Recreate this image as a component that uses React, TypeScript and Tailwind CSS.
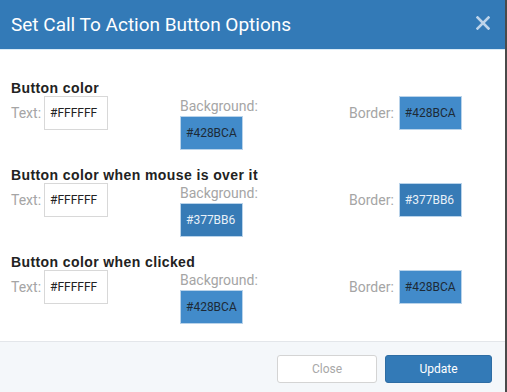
import React from 'react';

type Swatch = { value: string; bg: string; fg: string };

const sections: { title: string; text: string; background: Swatch; border: Swatch }[] = [
  {
    title: 'Button color',
    text: '#FFFFFF',
    background: { value: '#428BCA', bg: 'bg-[#428bca]', fg: 'text-[#1d2a36]' },
    border: { value: '#428BCA', bg: 'bg-[#428bca]', fg: 'text-[#1d2a36]' },
  },
  {
    title: 'Button color when mouse is over it',
    text: '#FFFFFF',
    background: { value: '#377BB6', bg: 'bg-[#377bb6]', fg: 'text-[#e8f0f8]' },
    border: { value: '#377BB6', bg: 'bg-[#377bb6]', fg: 'text-[#e8f0f8]' },
  },
  {
    title: 'Button color when clicked',
    text: '#FFFFFF',
    background: { value: '#428BCA', bg: 'bg-[#428bca]', fg: 'text-[#1d2a36]' },
    border: { value: '#428BCA', bg: 'bg-[#428bca]', fg: 'text-[#1d2a36]' },
  },
];

function ColorBox({ swatch }: { swatch: Swatch }) {
  return (
    <div
      className={`w-[63px] h-[34px] flex items-center pl-[5px] border border-[#b9d3ea] text-[12px] ${swatch.bg} ${swatch.fg}`}
    >
      {swatch.value}
    </div>
  );
}

export default function App() {
  return (
    <div className="w-[507px] h-[392px] flex bg-white font-['Roboto',sans-serif]">
      <div className="w-[505px] h-full flex flex-col">
        {/* Header */}
        <div className="h-[50px] shrink-0 bg-[#337ab7] flex items-center justify-between pl-[11px] pr-[15px] border-b border-[#d9ebf7]">
          <h1 className="text-white text-[19px] leading-none">Set Call To Action Button Options</h1>
          <svg width="14" height="14" viewBox="0 0 14 14" className="mb-[3px]">
            <path d="M1.5 1.5 L12.5 12.5 M12.5 1.5 L1.5 12.5" stroke="#bdd4ea" strokeWidth="2.6" strokeLinecap="square" />
          </svg>
        </div>

        {/* Body */}
        <div className="flex-1 pt-[30px] px-[11px]">
          {sections.map((s, i) => (
            <div key={i} className="h-[87px]">
              <div className="font-['Liberation_Sans',sans-serif] font-bold text-[14px] tracking-[0.4px] leading-[17px] text-[#222] h-[18px]">
                {s.title}
              </div>
              <div className="flex mt-[-2px]">
                <div className="w-[169px] flex items-center h-[34px]">
                  <span className="text-[14px] text-[#a5a5a5] mr-[3px]">Text:</span>
                  <div className="w-[64px] h-[34px] border border-[#d8d8d8] flex items-center pl-[5px] text-[12px] text-[#222]">
                    {s.text}
                  </div>
                </div>
                <div className="w-[169px] flex flex-col">
                  <span className="text-[14px] leading-[16px] mt-[2px] text-[#a5a5a5]">Background:</span>
                  <div className="mt-[2px]">
                    <ColorBox swatch={s.background} />
                  </div>
                </div>
                <div className="flex items-start h-[34px]">
                  <span className="text-[14px] text-[#a5a5a5] mr-[5px] mt-[7px]">Border:</span>
                  <ColorBox swatch={s.border} />
                </div>
              </div>
            </div>
          ))}
        </div>

        {/* Footer */}
        <div className="h-[54px] shrink-0 border-t border-[#e3e6ea] bg-[#f4f7fa] flex items-center justify-end gap-[8px] pr-[13px]">
          <button className="w-[100px] h-[28px] bg-white border border-[#d4d4d4] rounded-[3px] text-[12px] text-[#a8a8a8]">
            Close
          </button>
          <button className="w-[107px] h-[28px] bg-[#337ab7] border border-[#2e6da4] rounded-[3px] text-[12px] text-white">
            Update
          </button>
        </div>
      </div>
      <div className="w-[2px] h-full bg-[#4a4a4a]" />
    </div>
  );
}
